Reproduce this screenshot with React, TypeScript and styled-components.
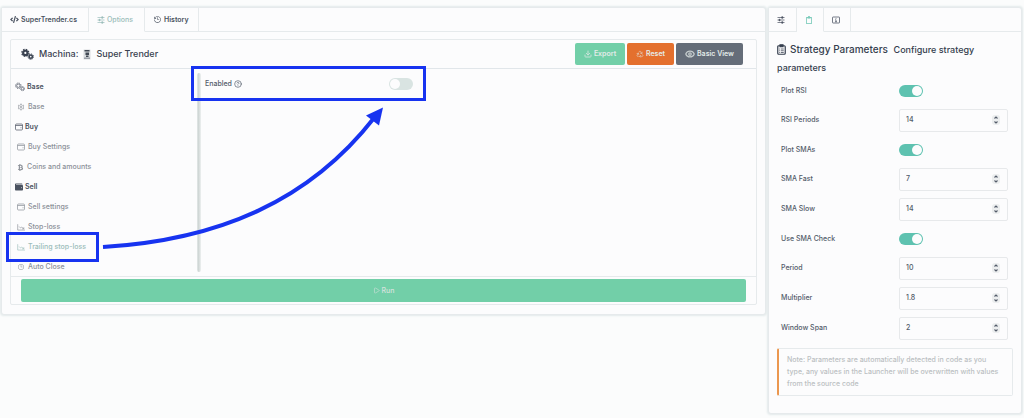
import React from "react";
import styled, { createGlobalStyle } from "styled-components";
import { FaCode, FaWallet, FaBtc, FaRegClipboard } from "react-icons/fa";
import { LiaCogSolid, LiaClock, LiaHistorySolid } from "react-icons/lia";
import { Play, CircleHelp, Download, Recycle, Eye } from "lucide-react";

const GlobalStyle = createGlobalStyle`
  * { box-sizing: border-box; }
  body {
    margin: 0;
    background: #fbfcfc;
    color: #525b69;
    font: 500 7px/12px Inter, "Liberation Sans", sans-serif;
  }
  button, input { font: inherit; color: inherit; }
  svg { flex: none; }
`;

const line = "#e6eaec";

const Page = styled.div`
  position: relative;
  display: grid;
  grid-template-columns: minmax(0, 1fr) 254px;
  align-items: start;
  gap: 2px;
  padding: 7px 2px 4px 1px;
`;

const Panel = styled.section`
  background: #fcfcfd;
  border: 1px solid ${line};
  border-radius: 3px;
  box-shadow: 0 0 2px 1px #e3eaeb;
`;

const TabBar = styled.nav`
  display: flex;
  height: 24px;
  border-bottom: 1px solid ${line};
`;

const Tab = styled.button<{ $active?: boolean; $width: number }>`
  display: flex;
  align-items: center;
  gap: 2px;
  width: ${(p) => p.$width}px;
  height: 24px;
  padding: 0 0 0 8px;
  border: 0;
  border-right: 1px solid ${line};
  background: #fcfcfd;
  color: ${(p) => (p.$active ? "#9bbdba" : "#4a5260")};
  font-weight: ${(p) => (p.$active ? 500 : 600)};
  border-bottom: 1px solid ${(p) => (p.$active ? "#fcfcfd" : line)};
`;

const Card = styled.div`
  margin: 7px 8px 9px;
  border: 1px solid ${line};
  border-radius: 2px;
`;

const CardHeader = styled.header`
  display: flex;
  align-items: center;
  gap: 2px;
  height: 29px;
  padding: 0 13px 0 10px;
  border-bottom: 1px solid #e1e6ea;
`;

const Title = styled.h1`
  display: flex;
  align-items: center;
  gap: 5px;
  flex: 1;
  margin: 0;
  color: #3a4250;
  font-size: 9px;
  font-weight: 500;
`;

const Action = styled.button<{ $color: string; $width: number }>`
  display: flex;
  align-items: center;
  justify-content: center;
  gap: 2px;
  width: ${(p) => p.$width}px;
  height: 22px;
  padding: 0;
  border: 0;
  border-radius: 2px;
  background: ${(p) => p.$color};
  color: #e4ebe9;
  font-weight: 600;
  svg { opacity: 0.75; }
`;

const CardBody = styled.div`
  display: flex;
  height: 207px;
`;

const Sidebar = styled.nav`
  width: 186px;
  padding-top: 8px;
  overflow: hidden;
`;

const Group = styled.h2`
  display: flex;
  align-items: center;
  gap: 2px;
  height: 20px;
  margin: 0;
  padding-left: 4px;
  color: #4a5260;
  font-size: 7px;
  font-weight: 600;
`;

const Item = styled.a<{ $active?: boolean }>`
  display: flex;
  align-items: center;
  gap: 3px;
  height: 20px;
  padding-left: 6px;
  color: ${(p) => (p.$active ? "#9bbdba" : "#8b9098")};
  text-decoration: none;
`;

const Divider = styled.div`
  width: 4px;
  margin: 4px 0;
  border-radius: 2px;
  background: linear-gradient(90deg, #e3e8e8, #cfd6d5 40%, #eef1f1);
`;

const Setting = styled.div`
  display: flex;
  align-items: center;
  justify-content: space-between;
  width: 208px;
  height: 30px;
  margin-left: 4px;
`;

const SettingLabel = styled.label`
  display: flex;
  align-items: center;
  gap: 2px;
`;

const Switch = styled.input`
  appearance: none;
  width: 24px;
  height: 12px;
  margin: 0;
  padding: 1px;
  border-radius: 6px;
  background: #d9e4e2;
  &::before {
    content: "";
    display: block;
    width: 10px;
    height: 10px;
    border-radius: 50%;
    background: #fcfcfd;
  }
  &:checked { background: #5ec2b0; }
  &:checked::before { margin-left: auto; }
`;

const CardFooter = styled.footer`
  padding: 2px 10px;
  border-top: 1px solid ${line};
`;

const RunButton = styled.button`
  display: flex;
  align-items: center;
  justify-content: center;
  gap: 2px;
  width: 100%;
  height: 23px;
  border: 0;
  border-radius: 2px;
  background: #72cfa8;
  color: #d5e2dd;
`;

const ParamsBody = styled.div`
  padding: 8px 8px 17px;
`;

const ParamsTitle = styled.h2`
  margin: 0;
  color: #353e4e;
  font-size: 10px;
  font-weight: 500;
  line-height: 18px;
  svg { vertical-align: -2px; margin-right: 4px; }
  small { margin-left: 3px; font-size: 9px; line-height: 12px; }
`;

const Row = styled.div<{ $short?: boolean }>`
  display: grid;
  grid-template-columns: 118px 109px;
  align-items: center;
  height: ${(p) => (p.$short ? 29 : 30)}px;
  padding-left: 4px;
`;

const NumberField = styled.span`
  display: flex;
  align-items: center;
  height: 23px;
  padding: 0 7px 0 6px;
  border: 1px solid #e7e9eb;
  border-radius: 2px;
`;

const NumberInput = styled.input`
  flex: 1;
  min-width: 0;
  padding: 0;
  border: 0;
  outline: 0;
  background: transparent;
  appearance: textfield;
  &::-webkit-inner-spin-button { display: none; }
`;

const Note = styled.p`
  margin: 5px 0 0;
  padding: 5px 8px;
  border: 1px solid ${line};
  border-left: 2px solid #eb974f;
  border-radius: 2px;
  color: #bbbfc2;
`;

const Annotations = styled.svg`
  position: absolute;
  top: 0;
  left: 0;
  pointer-events: none;
`;

const Glyph = styled.svg`
  fill: none;
  stroke: currentColor;
`;

const SlidersIcon = ({ size = 8 }: { size?: number }) => (
  <Glyph width={size} height={size} viewBox="0 0 16 16" strokeWidth="1.4">
    <path d="M1 3h14M1 8h14M1 13h14" />
    <path d="M9.500 1.500h2v3h-2zM4 6.500h2v3H4zM9.500 11.500h2v3h-2z" fill="currentColor" />
  </Glyph>
);

const GearsIcon = ({ size, bold }: { size: number; bold?: boolean }) => (
  <Glyph width={size} height={size} viewBox="0 0 24 24">
    <circle cx="8" cy="9" r="4" strokeWidth={bold ? 4 : 1.6} />
    <circle cx="8" cy="9" r="6.500" strokeWidth="2.200" strokeDasharray="2.900 2.200" />
    <circle cx="18" cy="16" r="3" strokeWidth={bold ? 3 : 1.5} />
    <circle cx="18" cy="16" r="5" strokeWidth="1.800" strokeDasharray="2.200 1.700" />
  </Glyph>
);

const WalletIcon = () => (
  <Glyph width="8" height="8" viewBox="0 0 16 16" strokeWidth="1.400">
    <rect x="1" y="2" width="14" height="12" rx="2" />
    <path d="M1 5h14M11 9.500h2" />
  </Glyph>
);

const InfoIcon = () => (
  <Glyph width="8" height="8" viewBox="0 0 16 16" strokeWidth="1.5">
    <rect x="1" y="2" width="14" height="12" rx="1" />
    <path d="M8 4.500v1.500M6.500 7.500H8v4M6 11.500h4" />
  </Glyph>
);

const ClipboardIcon = () => (
  <Glyph width="9" height="11" viewBox="0 0 18 22" strokeWidth="2.400">
    <rect x="1.500" y="3.500" width="15" height="17" rx="2" />
    <path d="M6 1.500h6v4H6z" fill="currentColor" />
    <path d="M4.500 10h1.500M7.500 10h6M4.500 13.500h1.500M7.500 13.500h6M4.500 17h1.500M7.500 17h6" strokeWidth="1.500" />
  </Glyph>
);

const FallingChartIcon = () => (
  <Glyph width="8" height="8" viewBox="0 0 17 16" strokeWidth="1.400">
    <path d="M1.500 2v12.500H17M4.500 7l3 3 2.500-2 4 4M14.500 8.500V12H11" />
  </Glyph>
);

const StepIcon = () => (
  <Glyph width="8" height="10" viewBox="0 0 16 20" strokeWidth="2.200">
    <rect width="16" height="20" rx="6" fill="#eceeef" stroke="none" />
    <path d="M5 7l3-3 3 3M5 13l3 3 3-3" />
  </Glyph>
);

const RobotIcon = () => (
  <svg width="8" height="11" viewBox="0 0 16 22">
    <rect x="1" y="1" width="14" height="20" rx="1" fill="#d9dcdf" />
    <path d="M3 2h10v3H3zM5 7h7v5H5zM6 13h5v3H6z" fill="#414854" />
    <path d="M2 17h12v3H2z" fill="#9aa0a8" />
  </svg>
);

type Param = { id: string; label: string; value?: string };

const params: Param[] = [
  { id: "plot-rsi", label: "Plot RSI" },
  { id: "rsi-periods", label: "RSI Periods", value: "14" },
  { id: "plot-smas", label: "Plot SMAs" },
  { id: "sma-fast", label: "SMA Fast", value: "7" },
  { id: "sma-slow", label: "SMA Slow", value: "14" },
  { id: "sma-check", label: "Use SMA Check" },
  { id: "period", label: "Period", value: "10" },
  { id: "multiplier", label: "Multiplier", value: "1.8" },
  { id: "window-span", label: "Window Span", value: "2" },
];

export default function App() {
  return (
    <>
      <GlobalStyle />
      <Page>
        <Panel>
          <TabBar>
            <Tab $width={87}><FaCode size={9} />SuperTrender.cs</Tab>
            <Tab $width={56} $active><SlidersIcon />Options</Tab>
            <Tab $width={54}><LiaHistorySolid size={9} />History</Tab>
          </TabBar>
          <Card>
            <CardHeader>
              <Title>
                <GearsIcon size={13} bold />
                <span>Machina:</span>
                <RobotIcon />
                <span>Super Trender</span>
              </Title>
              <Action $color="#72cfa8" $width={50}><Download size={8} strokeWidth={3} />Export</Action>
              <Action $color="#e4702e" $width={47}><Recycle size={8} />Reset</Action>
              <Action $color="#656d79" $width={67}><Eye size={10} strokeWidth={3} />Basic View</Action>
            </CardHeader>
            <CardBody>
              <Sidebar>
                <Group><GearsIcon size={10} />Base</Group>
                <Item href="#base"><LiaCogSolid size={8} />Base</Item>
                <Group><WalletIcon />Buy</Group>
                <Item href="#buy"><WalletIcon />Buy Settings</Item>
                <Item href="#coins"><FaBtc size={7} />Coins and amounts</Item>
                <Group><FaWallet size={8} />Sell</Group>
                <Item href="#sell"><WalletIcon />Sell settings</Item>
                <Item href="#stop"><FallingChartIcon />Stop-loss</Item>
                <Item href="#trailing" $active><FallingChartIcon />Trailing stop-loss</Item>
                <Item href="#close"><LiaClock size={8} />Auto Close</Item>
              </Sidebar>
              <Divider />
              <Setting>
                <SettingLabel htmlFor="enabled">Enabled<CircleHelp size={8} /></SettingLabel>
                <Switch id="enabled" type="checkbox" role="switch" />
              </Setting>
            </CardBody>
            <CardFooter>
              <RunButton><Play size={7} strokeWidth={2} />Run</RunButton>
            </CardFooter>
          </Card>
        </Panel>

        <Panel>
          <TabBar>
            <Tab $width={28} aria-label="Settings"><SlidersIcon /></Tab>
            <Tab $width={27} $active aria-label="Parameters"><FaRegClipboard size={8} color="#6cc5b3" /></Tab>
            <Tab $width={27} aria-label="Info"><InfoIcon /></Tab>
          </TabBar>
          <ParamsBody>
            <ParamsTitle>
              <ClipboardIcon />Strategy Parameters <small>Configure strategy parameters</small>
            </ParamsTitle>
            {params.map((p) => (
              <Row key={p.id} $short={p.value === undefined}>
                <label htmlFor={p.id}>{p.label}</label>
                {p.value === undefined ? (
                  <Switch id={p.id} type="checkbox" role="switch" defaultChecked />
                ) : (
                  <NumberField>
                    <NumberInput id={p.id} type="number" step="any" defaultValue={p.value} />
                    <StepIcon />
                  </NumberField>
                )}
              </Row>
            ))}
            <Note>
              Note: Parameters are automatically detected in code as you type, any values in the
              Launcher will be overwritten with values from the source code
            </Note>
          </ParamsBody>
        </Panel>

        <Annotations width="430" height="266" viewBox="0 0 430 266" fill="none" stroke="#1733f0">
          <rect x="192.500" y="67.500" width="232" height="32" strokeWidth="3" />
          <rect x="7.500" y="233.500" width="90" height="27" strokeWidth="3" />
          <path d="M103 247C220 240 310 200 374 118" strokeWidth="4" />
          <path d="M383 107.500L366 115.500L379 125.500Z" fill="#1733f0" stroke="none" />
        </Annotations>
      </Page>
    </>
  );
}
